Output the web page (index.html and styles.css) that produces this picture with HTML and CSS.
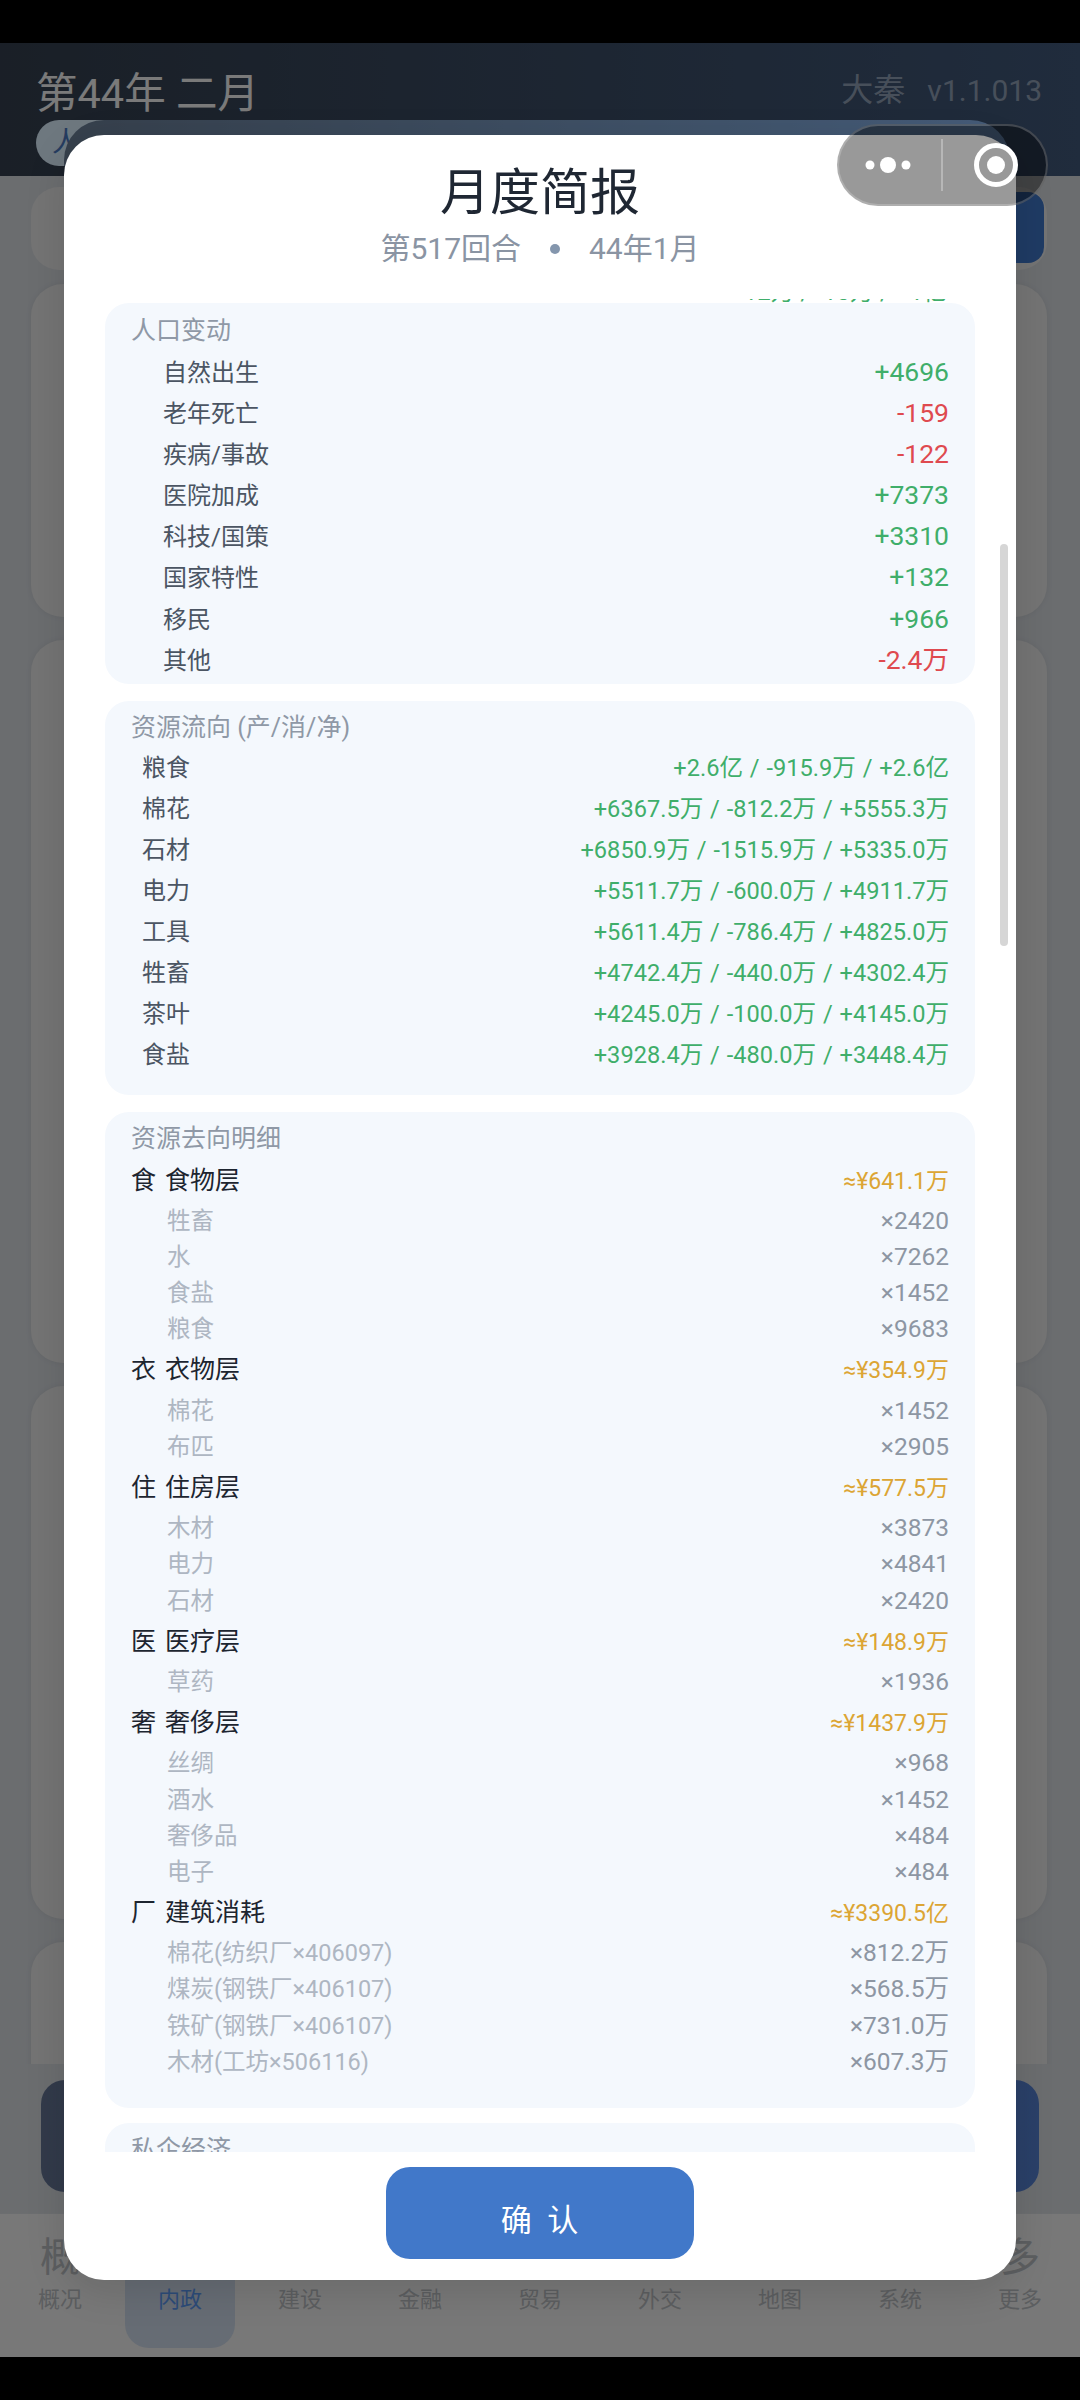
FILE: index.html
```html
<!DOCTYPE html>
<html>
<head>
<meta charset="UTF-8">
<title>月度简报</title>
<link rel="stylesheet" href="styles.css">
</head>
<body>
	<div class="black-bar top"></div>

	<div id="app">
		<div class="header">
			<div class="header-row">
				<div class="date">第44年 二月</div>
				<div class="version">大秦<span class="version-no">v1.1.013</span></div>
			</div>
			<div class="tabs">
				<div class="tab-pill">人口</div>
				<div class="tab-strip"></div>
			</div>
		</div>

		<div class="content">
			<div class="page-scroll">
				<div class="top-card">
					<div class="top-btn"></div>
				</div>
				<div class="bg-card h333"></div>
				<div class="bg-card h723"></div>
				<div class="bg-card h533"></div>
				<div class="bg-card h200"></div>
			</div>
			<div class="action-bar"></div>
		</div>

		<div class="nav">
			<div class="nav-item"><div class="nav-icon">概</div><div class="nav-label">概况</div></div>
			<div class="nav-item active"><div class="nav-icon">内</div><div class="nav-label">内政</div></div>
			<div class="nav-item"><div class="nav-icon">建</div><div class="nav-label">建设</div></div>
			<div class="nav-item"><div class="nav-icon">金</div><div class="nav-label">金融</div></div>
			<div class="nav-item"><div class="nav-icon">贸</div><div class="nav-label">贸易</div></div>
			<div class="nav-item"><div class="nav-icon">外</div><div class="nav-label">外交</div></div>
			<div class="nav-item"><div class="nav-icon">地</div><div class="nav-label">地图</div></div>
			<div class="nav-item"><div class="nav-icon">系</div><div class="nav-label">系统</div></div>
			<div class="nav-item"><div class="nav-icon">多</div><div class="nav-label">更多</div></div>
		</div>

		<div class="mask"></div>

		<div class="modal">
			<div class="modal-head">
				<div class="modal-title">月度简报</div>
				<div class="modal-sub"><span>第517回合</span><span class="dot"></span><span>44年1月</span></div>
			</div>

			<div class="report">
				<div class="peek"><span>+12万 / -10万 / +1亿</span></div>

				<div class="section pop">
					<div class="section-title">人口变动</div>
					<div class="row indent-l"><span class="name">自然出生</span><span class="up">+4696</span></div>
					<div class="row indent-l"><span class="name">老年死亡</span><span class="down">-159</span></div>
					<div class="row indent-l"><span class="name">疾病/事故</span><span class="down">-122</span></div>
					<div class="row indent-l"><span class="name">医院加成</span><span class="up">+7373</span></div>
					<div class="row indent-l"><span class="name">科技/国策</span><span class="up">+3310</span></div>
					<div class="row indent-l"><span class="name">国家特性</span><span class="up">+132</span></div>
					<div class="row indent-l"><span class="name">移民</span><span class="up">+966</span></div>
					<div class="row indent-l"><span class="name">其他</span><span class="down">-2.4万</span></div>
				</div>

				<div class="section flow">
					<div class="section-title">资源流向 (产/消/净)</div>
					<div class="row indent-s"><span class="name">粮食</span><span class="up">+2.6亿 / -915.9万 / +2.6亿</span></div>
					<div class="row indent-s"><span class="name">棉花</span><span class="up">+6367.5万 / -812.2万 / +5555.3万</span></div>
					<div class="row indent-s"><span class="name">石材</span><span class="up">+6850.9万 / -1515.9万 / +5335.0万</span></div>
					<div class="row indent-s"><span class="name">电力</span><span class="up">+5511.7万 / -600.0万 / +4911.7万</span></div>
					<div class="row indent-s"><span class="name">工具</span><span class="up">+5611.4万 / -786.4万 / +4825.0万</span></div>
					<div class="row indent-s"><span class="name">牲畜</span><span class="up">+4742.4万 / -440.0万 / +4302.4万</span></div>
					<div class="row indent-s"><span class="name">茶叶</span><span class="up">+4245.0万 / -100.0万 / +4145.0万</span></div>
					<div class="row indent-s"><span class="name">食盐</span><span class="up">+3928.4万 / -480.0万 / +3448.4万</span></div>
				</div>

				<div class="section detail">
					<div class="section-title">资源去向明细</div>

					<div class="layer"><span class="layer-name"><i>食</i>食物层</span><span class="gold">≈¥641.1万</span></div>
					<div class="sub"><span>牲畜</span><span class="qty">×2420</span></div>
					<div class="sub"><span>水</span><span class="qty">×7262</span></div>
					<div class="sub"><span>食盐</span><span class="qty">×1452</span></div>
					<div class="sub"><span>粮食</span><span class="qty">×9683</span></div>

					<div class="layer"><span class="layer-name"><i>衣</i>衣物层</span><span class="gold">≈¥354.9万</span></div>
					<div class="sub"><span>棉花</span><span class="qty">×1452</span></div>
					<div class="sub"><span>布匹</span><span class="qty">×2905</span></div>

					<div class="layer"><span class="layer-name"><i>住</i>住房层</span><span class="gold">≈¥577.5万</span></div>
					<div class="sub"><span>木材</span><span class="qty">×3873</span></div>
					<div class="sub"><span>电力</span><span class="qty">×4841</span></div>
					<div class="sub"><span>石材</span><span class="qty">×2420</span></div>

					<div class="layer"><span class="layer-name"><i>医</i>医疗层</span><span class="gold">≈¥148.9万</span></div>
					<div class="sub"><span>草药</span><span class="qty">×1936</span></div>

					<div class="layer"><span class="layer-name"><i>奢</i>奢侈层</span><span class="gold">≈¥1437.9万</span></div>
					<div class="sub"><span>丝绸</span><span class="qty">×968</span></div>
					<div class="sub"><span>酒水</span><span class="qty">×1452</span></div>
					<div class="sub"><span>奢侈品</span><span class="qty">×484</span></div>
					<div class="sub"><span>电子</span><span class="qty">×484</span></div>

					<div class="layer"><span class="layer-name"><i>厂</i>建筑消耗</span><span class="gold">≈¥3390.5亿</span></div>
					<div class="sub"><span>棉花(纺织厂×406097)</span><span class="qty">×812.2万</span></div>
					<div class="sub"><span>煤炭(钢铁厂×406107)</span><span class="qty">×568.5万</span></div>
					<div class="sub"><span>铁矿(钢铁厂×406107)</span><span class="qty">×731.0万</span></div>
					<div class="sub"><span>木材(工坊×506116)</span><span class="qty">×607.3万</span></div>
				</div>

				<div class="section private">
					<div class="section-title">私企经济</div>
				</div>
			</div>

			<div class="scroll-thumb"></div>

			<div class="modal-foot">
				<button class="ok-btn">确 认</button>
			</div>
		</div>

		<!-- 小程序胶囊 -->
		<div class="capsule">
			<svg class="capsule-dots" width="60" height="20" viewBox="0 0 60 20">
				<circle cx="9" cy="10" r="4.5" fill="#fff"/>
				<circle cx="27" cy="10" r="8" fill="#fff"/>
				<circle cx="45" cy="10" r="4.5" fill="#fff"/>
			</svg>
			<div class="capsule-line"></div>
			<svg class="capsule-ring" width="46" height="46" viewBox="0 0 46 46">
				<circle cx="23" cy="23" r="19.5" fill="none" stroke="#fff" stroke-width="5"/>
				<circle cx="23" cy="23" r="9" fill="#fff"/>
			</svg>
		</div>
	</div>

	<div class="black-bar bottom"></div>
</body>
</html>
```

FILE: styles.css
```css
* {
	box-sizing: border-box;
}

body {
	margin: 0;
	width: 1080px;
	height: 2400px;
	overflow: hidden;
	background-color: #000000;
	font-family: Roboto, "Noto Sans CJK SC", sans-serif;
}

.black-bar.top {
	height: 43px;
}

.black-bar.bottom {
	height: 43px;
}

#app {
	position: relative;
	display: flex;
	flex-direction: column;
	height: 2314px;
	background-color: #d6dadf;
}

/*顶部*/
.header {
	height: 133px;
	padding: 24px 38px 0 36px;
	background: linear-gradient(90deg, #343f4e, #40587a);
}

.header-row {
	display: flex;
	justify-content: space-between;
	align-items: center;
	height: 53px;
}

.date {
	font-size: 41.5px;
	line-height: 48px;
	color: #f4f4f4;
}

.version {
	margin-top: -6px;
	font-size: 32px;
	line-height: 44px;
	color: #8f9fb4;
}

.version-no {
	margin-left: 22px;
	font-size: 30px;
}

.tabs {
	position: relative;
	height: 46px;
}

.tab-pill {
	position: absolute;
	left: 0;
	top: 0;
	width: 160px;
	height: 46px;
	padding-left: 16px;
	border-radius: 23px;
	background-color: #dcf0ff;
	font-size: 28px;
	line-height: 46px;
	color: #4a78c0;
}

.tab-strip {
	position: absolute;
	left: 28px;
	top: 0;
	width: 946px;
	height: 46px;
	border-radius: 40px 40px 0 0;
	background: linear-gradient(90deg, #6c8098, #8ab8f2);
}

/*背景内容*/
.content {
	flex: 1;
	display: flex;
	flex-direction: column;
}

.page-scroll {
	height: 1888px;
	padding: 11px 33px 0 31px;
	overflow: hidden;
}

.top-card {
	display: flex;
	justify-content: flex-end;
	height: 83px;
	margin-bottom: 14px;
	padding-top: 5px;
	border-radius: 28px;
	background-color: #e8e8e8;
}

.top-btn {
	width: 120px;
	height: 71px;
	margin-right: 3px;
	border-radius: 16px;
	background-color: #3f76c8;
}

.bg-card {
	margin-bottom: 23px;
	border-radius: 32px;
	background-color: #e8e8e8;
	box-shadow: 0 0 6px rgba(0, 0, 0, 0.06);
}

.h333 { height: 333px; }
.h723 { height: 723px; }
.h533 { height: 533px; }
.h200 { height: 200px; }

.action-bar {
	height: 112px;
	margin: 16px 41px 0 41px;
	border-radius: 24px;
	background: linear-gradient(90deg, #647494, #5480d2);
}

/*底部导航*/
.nav {
	display: flex;
	height: 144px;
	border-top: 1px solid #d9dde1;
	background-color: #f0f0f0;
}

.nav-item {
	flex: 1;
	height: 134px;
	margin: 0 5px;
	border-radius: 0 0 24px 24px;
	text-align: center;
	color: #b8bcc0;
}

.nav-item.active {
	background-color: #ccd8e8;
	color: #5a96f0;
}

.nav-icon {
	padding-top: 22px;
	font-size: 40px;
	line-height: 44px;
}

.nav-label {
	margin-top: 6px;
	font-size: 22px;
	line-height: 28px;
}

.mask {
	position: absolute;
	left: 0;
	top: 0;
	width: 100%;
	height: 100%;
	background-color: rgba(0, 0, 0, 0.5);
}

/*弹窗*/
.modal {
	position: absolute;
	left: 64px;
	top: 92px;
	display: flex;
	flex-direction: column;
	width: 952px;
	height: 2145px;
	border-radius: 40px;
	background-color: #ffffff;
	box-shadow: 0 10px 40px rgba(0, 0, 0, 0.12);
}

.modal-head {
	height: 161px;
	padding-top: 28px;
	text-align: center;
}

.modal-title {
	font-size: 50px;
	line-height: 60px;
	color: #1f2733;
}

.modal-sub {
	display: flex;
	justify-content: center;
	align-items: center;
	margin-top: 8px;
	font-size: 30px;
	line-height: 36px;
	color: #8a94a3;
}

.modal-sub .dot {
	width: 10px;
	height: 10px;
	margin: 0 29px;
	border-radius: 50%;
	background-color: #8496ad;
}

.report {
	flex: 1;
	padding: 0 41px;
	overflow: hidden;
}

.peek {
	display: flex;
	justify-content: flex-end;
	align-items: flex-end;
	height: 4px;
	margin-top: 3px;
	padding-right: 28px;
	overflow: hidden;
	font-size: 24px;
	line-height: 24px;
	color: #3fae6a;
}

.peek span {
	margin-bottom: -1px;
}

.section {
	padding: 10px 26px 18px 26px;
	margin-bottom: 17px;
	border-radius: 24px;
	background-color: #f4f8fd;
}

.section.pop {
	padding: 11px 26px 4px 26px;
}

.section.detail {
	padding-bottom: 28px;
	margin-bottom: 15px;
}

.section-title {
	height: 37px;
	font-size: 25px;
	line-height: 34px;
	color: #8f98a6;
}

.detail .section-title {
	height: 36px;
}

.row {
	display: flex;
	justify-content: space-between;
	align-items: baseline;
	height: 41.1px;
	font-size: 24px;
	line-height: 41px;
}

.row .name {
	color: #4b5563;
}

.pop .up,
.pop .down {
	font-size: 26.5px;
}

.flow .up {
	font-size: 23.6px;
	word-spacing: 1px;
}

.indent-l {
	padding-left: 32px;
}

.indent-s {
	padding-left: 11px;
}

.up {
	color: #3fae6a;
}

.down {
	color: #df4a4f;
}

.layer {
	display: flex;
	justify-content: space-between;
	align-items: baseline;
	height: 45.2px;
	line-height: 45px;
}

.layer-name {
	font-size: 25px;
	color: #1d2530;
}

.layer-name i {
	margin-right: 9px;
	font-style: normal;
}

.gold {
	font-size: 23px;
	color: #dca534;
}

.sub {
	display: flex;
	justify-content: space-between;
	align-items: baseline;
	height: 36.2px;
	padding-left: 36px;
	font-size: 23.5px;
	line-height: 36px;
	color: #aeb6c2;
}

.qty {
	font-size: 24.5px;
	color: #8d96a3;
}

.scroll-thumb {
	position: absolute;
	left: 936px;
	top: 409px;
	width: 8px;
	height: 402px;
	border-radius: 4px;
	background-color: #d6d6d6;
}

.modal-foot {
	display: flex;
	justify-content: center;
	height: 128px;
	padding-top: 15px;
}

.ok-btn {
	width: 308px;
	height: 92px;
	padding: 8px 0 0 3px;
	border: 0;
	border-radius: 24px;
	background-color: #4178c9;
	font-family: Roboto, "Noto Sans CJK SC", sans-serif;
	font-size: 31px;
	letter-spacing: 4px;
	color: #ffffff;
}

/*胶囊按钮*/
.capsule {
	position: absolute;
	left: 837px;
	top: 81px;
	display: flex;
	align-items: center;
	width: 211px;
	height: 82px;
	padding-left: 22px;
	border: 2px solid rgba(255, 255, 255, 0.2);
	border-radius: 41px;
	background-color: rgba(0, 0, 0, 0.4);
}

.capsule-line {
	width: 2px;
	height: 52px;
	margin: 0 30px 0 20px;
	background-color: rgba(255, 255, 255, 0.3);
}

.capsule-ring {
	display: block;
}
```
